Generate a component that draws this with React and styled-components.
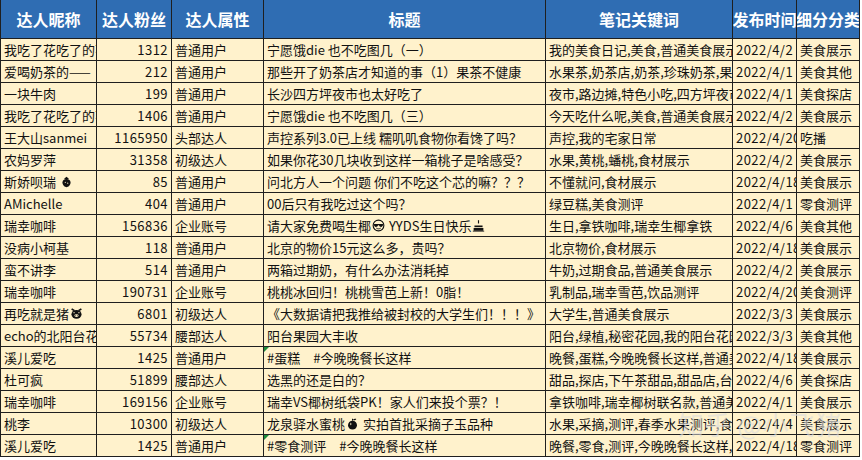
import React from "react";
import styled, { createGlobalStyle } from "styled-components";

const GlobalStyle = createGlobalStyle`
  html, body {
    margin: 0;
    padding: 0;
    background: #ffffff;
  }
  body {
    font-family: "Noto Sans CJK SC", "Noto Sans", sans-serif;
  }
`;

const Page = styled.div`
  position: relative;
  width: 862px;
  height: 460px;
  overflow: hidden;
  background: #ffffff;
`;

const Sheet = styled.div`
  display: grid;
  grid-template-columns: 96px 75px 92px 282px 187px 64px 63px;
  grid-auto-rows: 22px;
  grid-template-rows: 39px;
  width: 859px;
  border-left: 1px solid #1f1f1f;
  box-sizing: border-box;
`;

const HeadCell = styled.div`
  display: flex;
  align-items: center;
  justify-content: center;
  background: #2f6db3;
  color: #ffffff;
  font-size: 16px;
  font-weight: 700;
  white-space: nowrap;
  overflow: hidden;
  border-right: 1px solid #1f1f1f;
  border-bottom: 1px solid #1f1f1f;
  box-sizing: border-box;
`;

const Cell = styled.div`
  position: relative;
  display: flex;
  align-items: center;
  justify-content: ${(p) => (p.$align === "right" ? "flex-end" : "flex-start")};
  padding: 0 ${(p) => (p.$align === "right" ? "3px" : "0")} 0 ${(p) => (p.$align === "right" ? "0" : "3px")};
  background: #fff2cc;
  color: #111111;
  font-size: 13px;
  line-height: 21px;
  letter-spacing: ${(p) => (p.$latin ? "0.45px" : "0")};
  white-space: nowrap;
  overflow: hidden;
  border-right: 1px solid #1f1f1f;
  border-bottom: 1px solid #1f1f1f;
  box-sizing: border-box;

  &::before {
    content: "";
    display: ${(p) => (p.$flag ? "block" : "none")};
    position: absolute;
    left: 0;
    top: 0;
    border-top: 5px solid #1b8c3c;
    border-right: 5px solid transparent;
  }
`;

const Glyph = styled.svg`
  flex: none;
  width: 13px;
  height: 13px;
  margin: 0 1px;
`;

const Watermark = styled.div`
  position: absolute;
  left: 678px;
  top: 405px;
  font-size: 26px;
  color: rgba(220, 220, 220, 0.65);
  white-space: nowrap;
  pointer-events: none;
  letter-spacing: 0.5px;
`;

const Berry = () => (
  <Glyph viewBox="0 0 16 16">
    <path d="M8 5c3 0 5 1.6 5 4.2C13 12.5 10 15 8 15S3 12.5 3 9.2C3 6.6 5 5 8 5z" fill="#111" />
    <path d="M5 4.5L8 2l3 2.5L8 5.6z" fill="#111" />
    <circle cx="6.5" cy="9" r="0.7" fill="#fff2cc" />
    <circle cx="9.5" cy="10" r="0.7" fill="#fff2cc" />
  </Glyph>
);

const Cool = () => (
  <Glyph viewBox="0 0 16 16">
    <circle cx="8" cy="8" r="6.6" fill="none" stroke="#111" strokeWidth="1.4" />
    <path d="M2.5 6.3h11v1.2c0 1.4-1.1 2.2-2.3 2.2S9 8.9 8.6 7.6H7.4C7 8.9 6.2 9.7 4.8 9.7S2.5 8.9 2.5 7.5z" fill="#111" />
    <path d="M5.3 11.2c1.6 1.2 3.8 1.2 5.4 0" fill="none" stroke="#111" strokeWidth="1.2" />
  </Glyph>
);

const Cake = () => (
  <Glyph viewBox="0 0 16 16">
    <rect x="7.3" y="1.5" width="1.4" height="4" fill="#111" />
    <path d="M3 8h10v2H3z" fill="#111" />
    <path d="M2 11h12v3.5H2z" fill="#111" />
    <path d="M1 15h14" stroke="#111" strokeWidth="1" />
  </Glyph>
);

const Pig = () => (
  <Glyph viewBox="0 0 16 16">
    <path d="M2 2.5l3.5 2M14 2.5l-3.5 2" stroke="#111" strokeWidth="2" />
    <ellipse cx="8" cy="9" rx="6.2" ry="5.4" fill="#111" />
    <ellipse cx="8" cy="10.5" rx="2.6" ry="1.7" fill="#fff2cc" />
    <circle cx="7" cy="10.5" r="0.6" fill="#111" />
    <circle cx="9" cy="10.5" r="0.6" fill="#111" />
    <circle cx="5" cy="7" r="0.8" fill="#fff2cc" />
    <circle cx="11" cy="7" r="0.8" fill="#fff2cc" />
  </Glyph>
);

const Peach = () => (
  <Glyph viewBox="0 0 16 16">
    <circle cx="8" cy="10" r="5.5" fill="#111" />
    <path d="M8 4.5V2.2" stroke="#111" strokeWidth="1.3" />
    <path d="M8.5 3.6c1.5-1.8 3.5-1.6 4.2-1.2-0.8 1.6-2.6 2-4.2 1.2z" fill="#111" />
    <ellipse cx="5.8" cy="8.5" rx="0.9" ry="1.5" fill="#fff2cc" opacity="0.7" />
  </Glyph>
);

const headers = ["达人昵称", "达人粉丝", "达人属性", "标题", "笔记关键词", "发布时间", "细分分类"];

const rows = [
  ["我吃了花吃了的花", 1312, "普通用户", "宁愿饿die 也不吃图几（一）", "我的美食日记,美食,普通美食展示", "2022/4/2", "美食展示"],
  ["爱喝奶茶的——", 212, "普通用户", "那些开了奶茶店才知道的事（1）果茶不健康", "水果茶,奶茶店,奶茶,珍珠奶茶,果茶", "2022/4/1", "美食其他"],
  ["一块牛肉", 199, "普通用户", "长沙四方坪夜市也太好吃了", "夜市,路边摊,特色小吃,四方坪夜市", "2022/4/1", "美食探店"],
  ["我吃了花吃了的花", 1406, "普通用户", "宁愿饿die 也不吃图几（三）", "今天吃什么呢,美食,普通美食展示", "2022/4/2", "美食展示"],
  ["王大山sanmei", 1165950, "头部达人", "声控系列3.0已上线 糯叽叽食物你看馋了吗？", "声控,我的宅家日常", "2022/4/20", "吃播"],
  ["农妈罗萍", 31358, "初级达人", "如果你花30几块收到这样一箱桃子是啥感受？", "水果,黄桃,蟠桃,食材展示", "2022/4/2", "美食展示"],
  [<>斯娇呗瑞&nbsp;<Berry /></>, 85, "普通用户", "问北方人一个问题 你们不吃这个芯的嘛？？？", "不懂就问,食材展示", "2022/4/18", "美食展示"],
  ["AMichelle", 404, "普通用户", "00后只有我吃过这个吗？", "绿豆糕,美食测评", "2022/4/1", "零食测评"],
  ["瑞幸咖啡", 156836, "企业账号", <>请大家免费喝生椰<Cool />&nbsp;YYDS生日快乐<Cake /></>, "生日,拿铁咖啡,瑞幸生椰拿铁", "2022/4/6", "美食其他"],
  ["没病小柯基", 118, "普通用户", "北京的物价15元这么多，贵吗？", "北京物价,食材展示", "2022/4/18", "美食展示"],
  ["蛮不讲李", 514, "普通用户", "两箱过期奶，有什么办法消耗掉", "牛奶,过期食品,普通美食展示", "2022/4/2", "美食展示"],
  ["瑞幸咖啡", 190731, "企业账号", "桃桃冰回归！桃桃雪芭上新！0脂！", "乳制品,瑞幸雪芭,饮品测评", "2022/4/20", "美食测评"],
  [<>再吃就是猪<Pig /></>, 6801, "初级达人", "《大数据请把我推给被封校的大学生们！！！》", "大学生,普通美食展示", "2022/3/3", "美食展示"],
  ["echo的北阳台花园", 55734, "腰部达人", "阳台果园大丰收", "阳台,绿植,秘密花园,我的阳台花园", "2022/3/3", "美食其他"],
  ["溪儿爱吃", 1425, "普通用户", "#蛋糕　#今晚晚餐长这样", "晚餐,蛋糕,今晚晚餐长这样,普通美食展示", "2022/4/18", "美食展示", true],
  ["杜可疯", 51899, "腰部达人", "选黑的还是白的？", "甜品,探店,下午茶甜品,甜品店,台湾", "2022/4/6", "美食探店"],
  ["瑞幸咖啡", 169156, "企业账号", "瑞幸VS椰树纸袋PK！家人们来投个票？！", "拿铁咖啡,瑞幸椰树联名款,普通美食展示", "2022/4/1", "美食展示"],
  ["桃李", 10300, "初级达人", <>龙泉驿水蜜桃<Peach />&nbsp;实拍首批采摘子玉品种</>, "水果,采摘,测评,春季水果测评,食材展示", "2022/4/4", "美食展示"],
  ["溪儿爱吃", 1425, "普通用户", "#零食测评　#今晚晚餐长这样", "晚餐,零食,测评,今晚晚餐长这样,普通美食展示", "2022/4/18", "零食测评", true],
];

export default function App() {
  return (
    <Page>
      <GlobalStyle />
      <Sheet>
        {headers.map((h) => (
          <HeadCell key={h}>{h}</HeadCell>
        ))}
        {rows.map((r, i) => (
          <React.Fragment key={i}>
            <Cell>{r[0]}</Cell>
            <Cell $align="right" $latin>{r[1]}</Cell>
            <Cell>{r[2]}</Cell>
            <Cell $flag={r[7]}>{r[3]}</Cell>
            <Cell>{r[4]}</Cell>
            <Cell $latin>{r[5]}</Cell>
            <Cell>{r[6]}</Cell>
          </React.Fragment>
        ))}
      </Sheet>
      <Watermark>知乎 @小飞猪</Watermark>
    </Page>
  );
}
